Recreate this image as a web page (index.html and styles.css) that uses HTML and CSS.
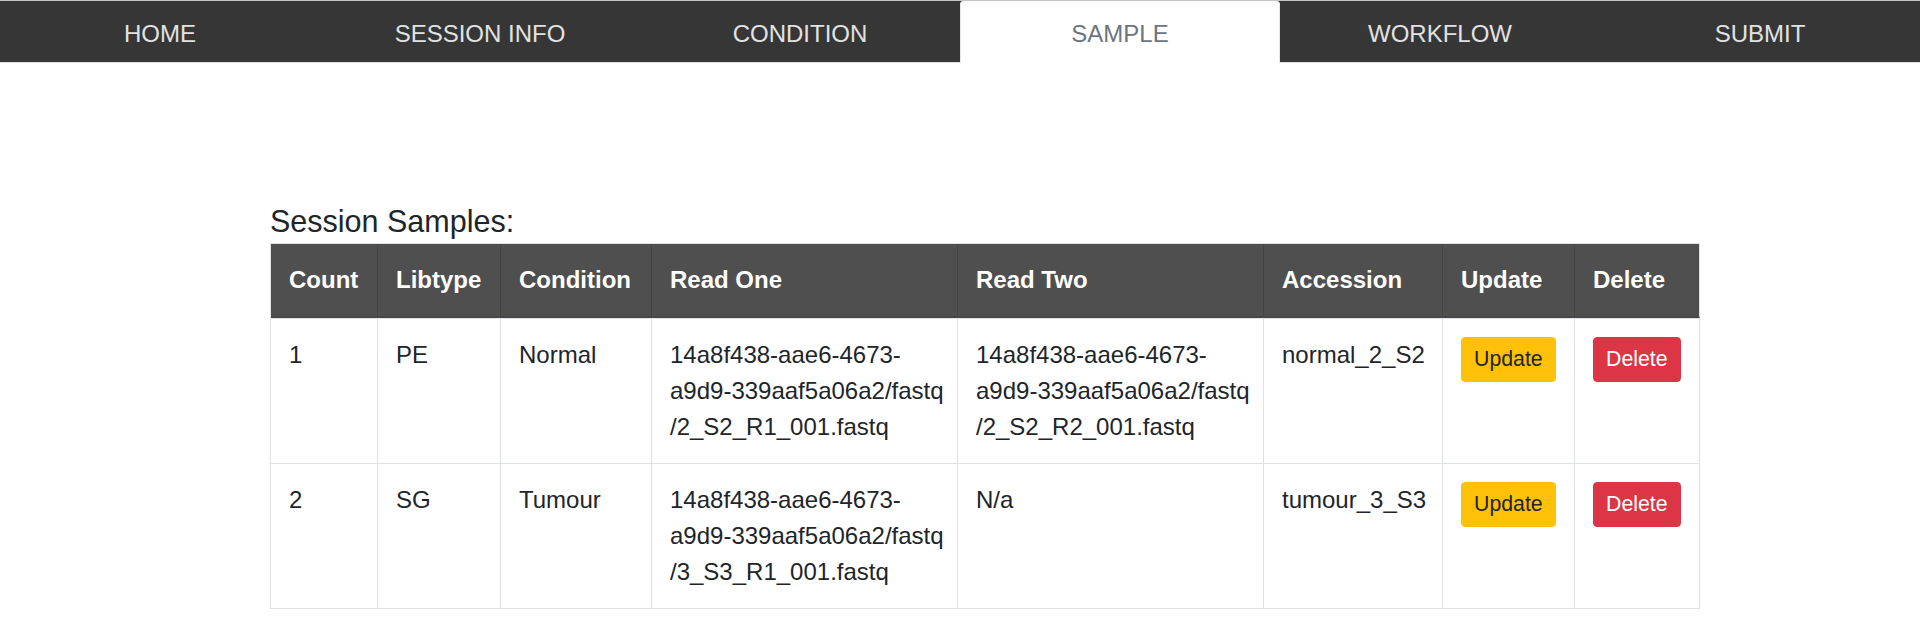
FILE: index.html
```html
<!DOCTYPE html>
<html lang="en">
<head>
<meta charset="utf-8">
<title>Session Samples</title>
<link rel="stylesheet" href="styles.css">
</head>
<body>
<nav class="topnav">
  <ul class="tabs">
    <li class="tab"><a class="tab-link" href="#">HOME</a></li>
    <li class="tab"><a class="tab-link" href="#">SESSION INFO</a></li>
    <li class="tab"><a class="tab-link" href="#">CONDITION</a></li>
    <li class="tab"><a class="tab-link active" href="#">SAMPLE</a></li>
    <li class="tab"><a class="tab-link" href="#">WORKFLOW</a></li>
    <li class="tab"><a class="tab-link" href="#">SUBMIT</a></li>
  </ul>
</nav>
<main class="content">
  <h3 class="section-title">Session Samples:</h3>
  <table class="samples">
    <thead>
      <tr>
        <th class="c-count">Count</th>
        <th class="c-lib">Libtype</th>
        <th class="c-cond">Condition</th>
        <th class="c-read">Read One</th>
        <th class="c-read">Read Two</th>
        <th class="c-acc">Accession</th>
        <th class="c-upd">Update</th>
        <th class="c-del">Delete</th>
      </tr>
    </thead>
    <tbody>
      <tr>
        <td>1</td>
        <td>PE</td>
        <td>Normal</td>
        <td class="path">14a8f438-aae6-4673-<br>a9d9-339aaf5a06a2/fastq<br>/2_S2_R1_001.fastq</td>
        <td class="path">14a8f438-aae6-4673-<br>a9d9-339aaf5a06a2/fastq<br>/2_S2_R2_001.fastq</td>
        <td>normal_2_S2</td>
        <td><button class="btn btn-update" type="button">Update</button></td>
        <td><button class="btn btn-delete" type="button">Delete</button></td>
      </tr>
      <tr>
        <td>2</td>
        <td>SG</td>
        <td>Tumour</td>
        <td class="path">14a8f438-aae6-4673-<br>a9d9-339aaf5a06a2/fastq<br>/3_S3_R1_001.fastq</td>
        <td>N/a</td>
        <td>tumour_3_S3</td>
        <td><button class="btn btn-update" type="button">Update</button></td>
        <td><button class="btn btn-delete" type="button">Delete</button></td>
      </tr>
    </tbody>
  </table>
</main>
</body>
</html>
```
FILE: styles.css
```css
* { box-sizing: border-box; }

html, body {
  margin: 0;
  padding: 0;
  background: #ffffff;
}

body {
  font-family: "Liberation Sans", Arial, Helvetica, sans-serif;
  color: #212529;
  font-size: 24px;
  line-height: 36px;
}

.topnav {
  background: #363636;
  border-top: 1px solid #c4c4c4;
  border-bottom: 1px solid #e2e2e2;
}

.tabs {
  display: flex;
  list-style: none;
  margin: 0;
  padding: 0;
}

.tab {
  flex: 1 1 0;
  margin-bottom: -1px;
}

.tab-link {
  display: block;
  text-align: center;
  text-decoration: none;
  color: #e2e2e2;
  font-size: 24px;
  line-height: 36px;
  padding: 15px 0 11px;
  border-radius: 4px 4px 0 0;
}

.tab-link.active {
  background: #ffffff;
  color: #6c757d;
  box-shadow: inset 1px 0 0 #e6e6e6, inset -1px 0 0 #e6e6e6;
}

.content {
  margin: 0 221px 0 270px;
  padding-top: 140px;
}

.section-title {
  margin: 0 0 4px;
  font-size: 30.5px;
  line-height: 36px;
  font-weight: 400;
  color: #212529;
}

.samples {
  width: 1430px;
  table-layout: fixed;
  border-collapse: separate;
  border-spacing: 0;
  border-top: 1px solid #dee2e6;
  border-left: 1px solid #dee2e6;
}

.samples th,
.samples td {
  text-align: left;
  vertical-align: top;
  padding: 18px 12px 18px 18px;
  border-right: 1px solid #dee2e6;
  border-bottom: 1px solid #dee2e6;
  font-size: 24px;
  line-height: 36px;
}

.samples td.path {
  white-space: nowrap;
}

.samples th {
  background: #4f4f4f;
  color: #ffffff;
  font-weight: 700;
  border-right-color: #444444;
  border-bottom: 2px solid #484848;
}

.samples th:last-child {
  border-right-color: #dee2e6;
}

.samples tbody tr:first-child td {
  border-top: 1px solid #dee2e6;
}

.c-count { width: 107px; }
.c-lib { width: 123px; }
.c-cond { width: 151px; }
.c-read { width: 306px; }
.c-acc { width: 179px; }
.c-upd { width: 132px; }
.c-del { width: 125px; }

.btn {
  display: inline-block;
  vertical-align: top;
  font-family: "Liberation Sans", Arial, Helvetica, sans-serif;
  font-size: 21.3px;
  line-height: 31px;
  padding: 6px 12px;
  border: 1px solid transparent;
  border-radius: 4px;
  cursor: pointer;
}

.btn-update {
  background: #ffc107;
  border-color: #ffc107;
  color: #212529;
}

.btn-delete {
  background: #dc3545;
  border-color: #dc3545;
  color: #ffffff;
}
```
